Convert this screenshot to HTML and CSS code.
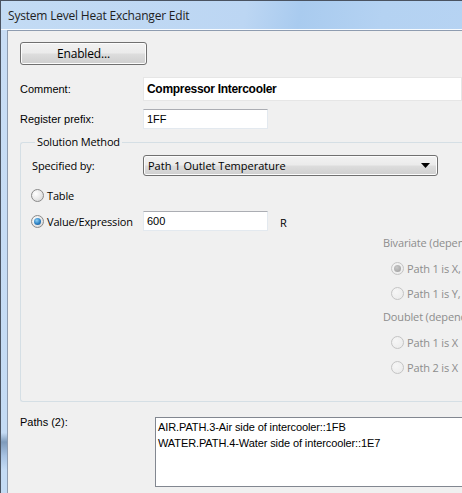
FILE: index.html
```html
<!DOCTYPE html>
<html>
<head>
<meta charset="utf-8">
<link rel="stylesheet" href="styles.css">
</head>
<body>
<div class="window">
  <div class="titlebar">System Level Heat Exchanger Edit</div>
  <div class="frame">
    <div class="client">
      <button class="btn">Enabled...</button>

      <div class="row row-comment">
        <span class="lbl">Comment:</span>
        <div class="field wide bold">Compressor Intercooler</div>
      </div>

      <div class="row row-prefix">
        <span class="lbl">Register prefix:</span>
        <div class="field short">1FF</div>
      </div>

      <fieldset class="group">
        <legend>Solution Method</legend>
        <div class="row row-spec">
          <span class="lbl g">Specified by:</span>
          <div class="select">
            <span>Path 1 Outlet Temperature</span>
            <svg class="caret" width="9" height="5" viewBox="0 0 9 5"><path d="M0 0h9L4.5 5z" fill="#000"/></svg>
          </div>
        </div>

        <label class="radio r-table"><span class="dot"></span>Table</label>

        <div class="row row-value">
          <label class="radio lbl g"><span class="dot on"></span>Value/Expression</label>
          <div class="field short">600</div>
          <span class="unit">R</span>
        </div>

        <div class="dep">
          <div class="dep-head">Bivariate (dependent)</div>
          <label class="radio dis"><span class="dot on off"></span>Path 1 is X, Path 2 is Y</label>
          <label class="radio dis"><span class="dot off"></span>Path 1 is Y, Path 2 is X</label>
          <div class="dep-head">Doublet (dependent)</div>
          <label class="radio dis"><span class="dot off"></span>Path 1 is X</label>
          <label class="radio dis"><span class="dot off"></span>Path 2 is X</label>
        </div>
      </fieldset>

      <div class="row row-paths">
        <span class="lbl">Paths (2):</span>
        <div class="list">
          <div>AIR.PATH.3-Air side of intercooler::1FB</div>
          <div>WATER.PATH.4-Water side of intercooler::1E7</div>
        </div>
      </div>
    </div>
  </div>
</div>
</body>
</html>
```

FILE: styles.css
```css
html, body {
  margin: 0;
  padding: 0;
  background: #ffffff;
  overflow: hidden;
}

.window {
  width: 462px;
  height: 493px;
  overflow: hidden;
  border-top: 1px solid #4a5361;
  border-left: 1px solid #4a5361;
  box-sizing: border-box;
  background: linear-gradient(100deg, #c3dbf4 0%, #bcd6f3 45%, #a9cbef 55%, #b4d2f2 70%, #b8d4f3 100%);
  display: flex;
  flex-direction: column;
  font-family: "Liberation Sans", Arial, sans-serif;
  font-size: 11px;
  color: #000;
}

.titlebar {
  height: 29px;
  flex: none;
  padding-left: 7px;
  display: flex;
  align-items: center;
  font-family: "Open Sans", "Noto Sans", sans-serif;
  font-size: 12px;
  letter-spacing: -0.2px;
  color: #1e1e1e;
  border-bottom: 1px solid #f7fbff;
  box-sizing: border-box;
  padding-top: 1px;
}

.frame {
  flex: 1;
  padding-left: 6px;
  display: flex;
  background: linear-gradient(180deg, #c8ddf5 0%, #c4dbf4 87%, #7f9bbb 89%, #a8c3e3 92%, #c4dbf4 95%);
}

.client {
  flex: 1;
  min-width: 0;
  background: #f0f0f0;
  border-top: 1px solid #8e9cb0;
  border-left: 1px solid #8e9cb0;
  padding: 11px 0 0 12px;
  display: flex;
  flex-direction: column;
  align-items: flex-start;
}

.btn {
  width: 127px;
  height: 23px;
  flex: none;
  margin: 0;
  border: 1px solid #707070;
  border-radius: 3px;
  background: linear-gradient(180deg, #f2f2f2 0%, #ebebeb 48%, #dddddd 52%, #cfcfcf 100%);
  box-shadow: inset 0 0 0 1px #fcfcfc;
  color: #000;
  padding: 0;
}

.row {
  display: flex;
  align-items: center;
  flex: none;
}

.lbl {
  width: 123px;
  flex: none;
}

.lbl.g {
  width: 111px;
}

.row-comment {
  margin-top: 12px;
  width: 100%;
}

.row-prefix {
  margin-top: 8px;
}

.field {
  box-sizing: border-box;
  background: #fff;
  border: 1px solid #e3e9ef;
  border-top-color: #abadb3;
  display: flex;
  align-items: center;
  padding-left: 3px;
}

.field.wide {
  flex: 1;
  height: 24px;
  border: 1px solid #e6e6e6;
  font-size: 12px;
  letter-spacing: -0.3px;
}

.bold {
  font-weight: bold;
}

.field.short {
  width: 125px;
  height: 20px;
}

.group {
  margin: 6px 0 0 0;
  padding: 0 0 0 11px;
  border: 1px solid #d5dfe5;
  border-right: none;
  border-radius: 3px 0 0 3px;
  width: 460px;
  height: 267px;
  flex: none;
  box-sizing: border-box;
  display: flex;
  flex-direction: column;
  align-items: flex-start;
}

.group legend {
  padding: 0 2px;
  margin-left: 3px;
  line-height: 14px;
}

.group legend, .lbl.g, .radio, .select, .dep-head, .unit, .btn {
  font-family: "Open Sans", "Noto Sans", sans-serif;
  font-size: 11px;
  letter-spacing: -0.15px;
}

.btn {
  font-size: 12px;
}

.select {
  width: 295px;
  height: 21px;
  box-sizing: border-box;
  border: 1px solid #707070;
  border-radius: 3px;
  background: linear-gradient(180deg, #f2f2f2 0%, #ebebeb 48%, #dddddd 52%, #cfcfcf 100%);
  box-shadow: inset 0 0 0 1px #fcfcfc;
  display: flex;
  align-items: center;
  justify-content: space-between;
  padding: 0 7px 0 4px;
  letter-spacing: 0;
}

.radio {
  display: flex;
  align-items: center;
  gap: 3px;
  height: 16px;
}

.dot {
  width: 11px;
  height: 11px;
  border-radius: 50%;
  border: 1px solid #8a8a8a;
  background: radial-gradient(circle at 35% 35%, #ffffff 0%, #eaeaea 50%, #cfcfcf 100%);
  flex: none;
  position: relative;
  margin-left: -1px;
}

.dot.on::after {
  content: "";
  position: absolute;
  left: 2px;
  top: 2px;
  width: 7px;
  height: 7px;
  border-radius: 50%;
  background: radial-gradient(circle at 40% 35%, #8fd1f6 0%, #2a7fc2 55%, #1b4f84 100%);
}

.dot.off {
  border-color: #c4c4c4;
  background: radial-gradient(circle at 35% 35%, #f6f6f6 0%, #e9e9e9 100%);
}

.dot.on.off::after {
  background: radial-gradient(circle at 40% 35%, #c9c9c9 0%, #9a9a9a 100%);
}

.row-spec {
  margin-top: 6px;
}

.r-table {
  margin-top: 11px;
  flex: none;
}

.row-value {
  margin-top: 8px;
}

.unit {
  margin-left: 12px;
  padding-top: 3px;
}

.dep {
  margin: 4px 0 0 351px;
  display: flex;
  flex-direction: column;
  align-items: flex-start;
  white-space: nowrap;
  color: #8d8d8d;
}

.dep-head {
  height: 16px;
  line-height: 16px;
}

.dep .radio {
  margin: 9px 0 0 9px;
}

.dep .radio + .dep-head {
  margin-top: 8px;
}

.row-paths {
  margin-top: 15px;
  align-items: flex-start;
}

.row-paths .lbl {
  width: 135px;
  margin-top: -1px;
}

.list {
  width: 320px;
  height: 70px;
  box-sizing: border-box;
  background: #fff;
  border: 1px solid #828790;
  padding: 1px 2px;
  line-height: 16px;
  letter-spacing: -0.1px;
}
```
